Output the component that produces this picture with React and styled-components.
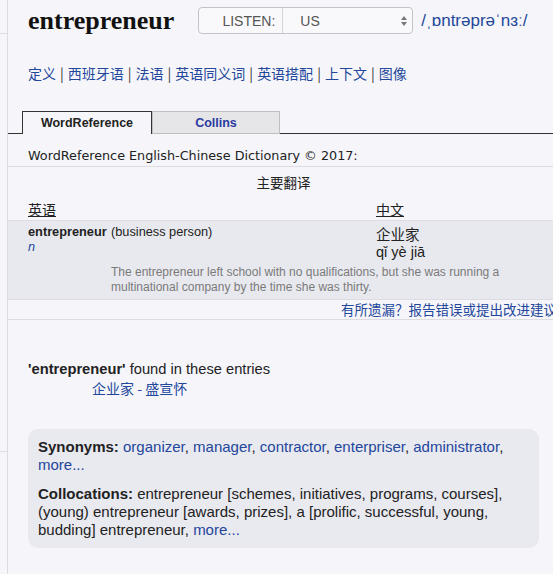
import styled, { createGlobalStyle } from "styled-components";

const colors = {
  page: "#f6f6fa",
  rowGray: "#e8e9ef",
  line: "#dcdce2",
  dark: "#222222",
  link: "#23479a",
  muted: "#7a7a7a",
};

const GlobalStyle = createGlobalStyle`
  html, body {
    margin: 0;
    padding: 0;
    background: ${colors.page};
  }
  body {
    font-family: "Liberation Sans", Arial, "Noto Sans CJK SC", sans-serif;
    color: ${colors.dark};
  }
`;

const Page = styled.div`
  display: flex;
  width: 553px;
  height: 574px;
  overflow: hidden;
  background: ${colors.page};
`;

const Sidebar = styled.div`
  width: 7px;
  flex-shrink: 0;
  border-right: 1px solid ${colors.line};
  display: flex;
  flex-direction: column;
`;

const SideMark = styled.div`
  height: ${({ h }) => h}px;
  border-bottom: 1px solid ${colors.line};
`;

const Main = styled.div`
  flex: 1;
  min-width: 0;
  display: flex;
  flex-direction: column;
`;

const Header = styled.div`
  display: flex;
  align-items: center;
  padding: 7px 0 0 20px;
  height: 27px;
`;

const Title = styled.h1`
  margin: 0 24px 0 0;
  font-family: "Liberation Serif", "Times New Roman", serif;
  font-size: 26px;
  font-weight: bold;
  color: #111;
  line-height: 27px;
`;

const Select = styled.div`
  display: flex;
  align-items: center;
  width: 213px;
  height: 25px;
  border: 1px solid #c4c4c8;
  border-radius: 4px;
  background: #f9f9fb;
  margin-right: 8px;
`;

const SelectLabel = styled.div`
  width: 84px;
  height: 100%;
  box-sizing: border-box;
  padding-right: 7px;
  display: flex;
  align-items: center;
  justify-content: flex-end;
  border-right: 1px solid #d4d4d8;
  font-size: 14px;
  color: #555;
`;

const SelectValue = styled.div`
  flex: 1;
  padding-left: 17px;
  font-size: 14px;
  color: #555;
`;

const Arrows = styled.div`
  display: flex;
  flex-direction: column;
  align-items: center;
  gap: 2px;
  margin-right: 5px;
`;

const Phonetic = styled.span`
  font-size: 17px;
  color: ${colors.link};
`;

const LangLinks = styled.div`
  padding: 29px 0 0 20px;
  font-family: "Noto Sans CJK SC", sans-serif;
  font-size: 14px;
  line-height: 20px;
  color: ${colors.link};
`;

const Bar = styled.span`
  color: #333;
  margin: 0 4px;
`;

const Tabs = styled.div`
  display: flex;
  margin-top: 28px;
  padding-left: 14px;
  border-bottom: 1px solid #333;
  height: 22px;
`;

const Tab = styled.div`
  width: ${({ active }) => (active ? 128 : 126)}px;
  height: ${({ active }) => (active ? 22 : 21)}px;
  margin-bottom: ${({ active }) => (active ? -1 : 0)}px;
  display: flex;
  align-items: center;
  justify-content: center;
  font-size: 12.5px;
  font-weight: bold;
  background: ${({ active }) => (active ? colors.page : "#e6e6e9")};
  color: ${({ active }) => (active ? "#222" : "#2a3aa0")};
  border: 1px solid ${({ active }) => (active ? "#333" : "#bdbdc2")};
  border-bottom: ${({ active }) => (active ? "none" : "1px solid #bdbdc2")};
`;

const DictHead = styled.div`
  padding: 14px 0 2px 20px;
  line-height: 16px;
  font-family: "DejaVu Sans", Verdana, sans-serif;
  font-size: 12.75px;
  border-bottom: 1px solid ${colors.line};
`;

const Section = styled.div`
  text-align: center;
  font-family: "Noto Sans CJK SC", sans-serif;
  font-size: 13.5px;
  line-height: 20px;
  padding: 5px 0 0 6px;
`;

const ColHead = styled.div`
  display: grid;
  grid-template-columns: 348px 1fr;
  padding: 7px 0 1px 20px;
  font-family: "Noto Sans CJK SC", sans-serif;
  font-size: 14px;
  line-height: 20px;
  border-bottom: 1px solid ${colors.line};

  span {
    text-decoration: underline;
  }
`;

const EntryRow = styled.div`
  display: grid;
  grid-template-columns: 83px 265px 1fr;
  padding: 3px 0 5px 20px;
  background: ${colors.rowGray};
  border-bottom: 1px solid ${colors.line};
  font-size: 12.75px;
  line-height: 15px;
`;

const Term = styled.div`
  display: flex;
  flex-direction: column;

  b {
    font-weight: bold;
  }

  i {
    color: ${colors.link};
  }
`;

const Translation = styled.div`
  font-size: 14.5px;
  line-height: 19px;

  .cjk {
    font-family: "Noto Sans CJK SC", sans-serif;
  }
`;

const Example = styled.div`
  grid-column: 2 / 4;
  color: ${colors.muted};
  font-size: 12px;
  padding-top: 3px;
  line-height: 14.5px;
  padding-right: 20px;
`;

const Report = styled.div`
  text-align: right;
  height: 19px;
  line-height: 19px;
  font-family: "Noto Sans CJK SC", sans-serif;
  font-size: 13.5px;
  color: ${colors.link};
  white-space: nowrap;
  border-bottom: 1px solid ${colors.line};
  margin-right: -4px;
`;

const Found = styled.div`
  padding: 40px 0 0 20px;
  font-size: 14.7px;
  line-height: 19px;
`;

const FoundLinks = styled.div`
  padding-left: 84px;
  font-family: "Noto Sans CJK SC", sans-serif;
  font-size: 14px;
  line-height: 19px;
  color: ${colors.link};
`;

const InfoBox = styled.div`
  margin: 31px 14px 0 20px;
  padding: 9px 10px;
  background: #e9e9f0;
  border-radius: 10px;
  font-size: 15px;
  line-height: 18px;

  p {
    margin: 0;
  }

  p + p {
    margin-top: 11px;
  }

  a {
    color: ${colors.link};
    text-decoration: none;
  }
`;

export default function App() {
  return (
    <>
      <GlobalStyle />
      <Page>
        <Sidebar>
          <SideMark h={33} />
          <div style={{ height: 416 }} />
          <SideMark h={1} />
        </Sidebar>
        <Main>
          <Header>
            <Title>entrepreneur</Title>
            <Select>
              <SelectLabel>LISTEN:</SelectLabel>
              <SelectValue>US</SelectValue>
              <Arrows>
                <svg width="6" height="4" viewBox="0 0 6 4">
                  <path d="M0 4 L3 0 L6 4 Z" fill="#777" />
                </svg>
                <svg width="6" height="4" viewBox="0 0 6 4">
                  <path d="M0 0 L3 4 L6 0 Z" fill="#777" />
                </svg>
              </Arrows>
            </Select>
            <Phonetic>/ˌɒntrəprəˈnɜː/</Phonetic>
          </Header>

          <LangLinks>
            定义<Bar>|</Bar>西班牙语<Bar>|</Bar>法语<Bar>|</Bar>英语同义词
            <Bar>|</Bar>英语搭配<Bar>|</Bar>上下文<Bar>|</Bar>图像
          </LangLinks>

          <Tabs>
            <Tab active>WordReference</Tab>
            <Tab>Collins</Tab>
          </Tabs>

          <DictHead>WordReference English-Chinese Dictionary © 2017:</DictHead>
          <Section>主要翻译</Section>
          <ColHead>
            <span>英语</span>
            <span>中文</span>
          </ColHead>

          <EntryRow>
            <Term>
              <b>entrepreneur</b>
              <i>n</i>
            </Term>
            <div>(business person)</div>
            <Translation>
              <div className="cjk">企业家</div>
              <div>qǐ yè jiā</div>
            </Translation>
            <Example>
              The entrepreneur left school with no qualifications, but she was
              running a multinational company by the time she was thirty.
            </Example>
          </EntryRow>
          <Report>有所遗漏？报告错误或提出改进建议</Report>

          <Found>
            <b>'entrepreneur'</b> found in these entries
          </Found>
          <FoundLinks>企业家 - 盛宣怀</FoundLinks>

          <InfoBox>
            <p>
              <b>Synonyms:</b> <a>organizer</a>, <a>manager</a>,{" "}
              <a>contractor</a>, <a>enterpriser</a>, <a>administrator</a>,{" "}
              <a>more...</a>
            </p>
            <p>
              <b>Collocations:</b> entrepreneur [schemes, initiatives,
              programs, courses], (young) entrepreneur [awards, prizes], a
              [prolific, successful, young, budding] entrepreneur,{" "}
              <a>more...</a>
            </p>
          </InfoBox>
        </Main>
      </Page>
    </>
  );
}
